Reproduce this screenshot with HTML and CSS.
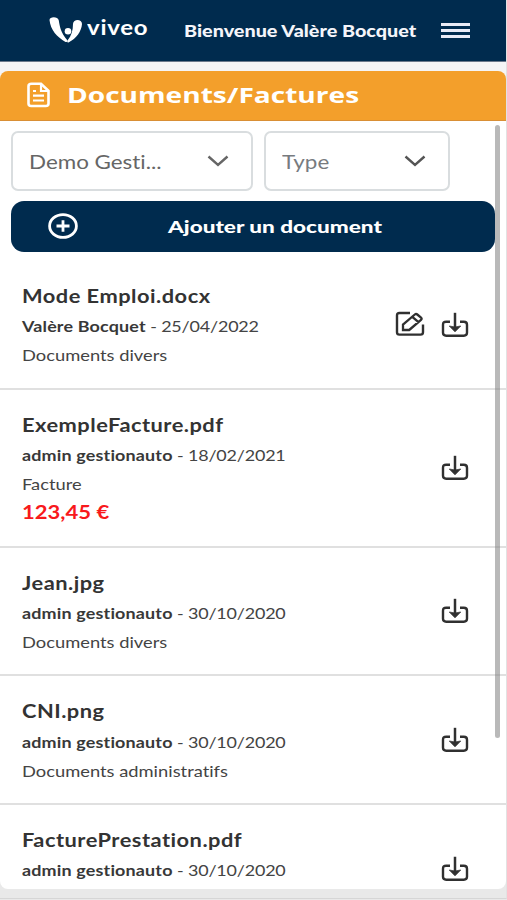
FILE: index.html
```html
<!DOCTYPE html>
<html lang="fr">
<head>
<meta charset="utf-8">
<meta name="viewport" content="width=device-width">
<title>Documents/Factures</title>
<link rel="stylesheet" href="styles.css">
</head>
<body>
<svg class="defs" aria-hidden="true">
  <symbol id="download" viewBox="0 0 28 26">
    <path d="M9 9.700H5.200Q2 9.700 2 12.700V20.800Q2 23.700 5.200 23.700H22.800Q26 23.700 26 20.800V12.700Q26 9.700 22.800 9.700H19" fill="none" stroke="currentColor" stroke-width="2.400"/>
    <path d="M14 .8V17" fill="none" stroke="currentColor" stroke-width="2.500"/>
    <path d="M8.300 14Q14 16 19.700 14L14 19.800Z" fill="currentColor" stroke="currentColor" stroke-width=".8"/>
  </symbol>
  <symbol id="edit" viewBox="0 0 30 26">
    <path d="M15 2H4.500Q2 2 2 4.400V21.200Q2 23.600 4.500 23.600H25.400Q28 23.600 28 21.200V13.500" fill="none" stroke="currentColor" stroke-width="2.400"/>
    <path d="M8 19V13.600L19.800 3.500Q21 2.400 22.300 3.500L26 6.600Q27.300 7.800 26 9L14.200 19ZM17.300 5.800L23.500 11.200" fill="none" stroke="currentColor" stroke-width="2.300"/>
  </symbol>
</svg>
<div class="app">
  <header class="topbar">
    <div class="brand">
      <svg class="logo" viewBox="0 0 34 28">
        <path d="M.5 4C.5.500 9 .200 9.800 4.500C10.600 9.500 11.500 16.500 18.500 24.500Q18.500 26.500 16.500 26C8 21 1.500 14 .500 4Z" fill="#fff"/>
        <path d="M24 8C24.200 2.800 33 2.800 33 8C32.500 15 27.500 22.500 19.500 26.500Q17.500 27 18.500 24.500C22.500 19.500 24 14 24 8Z" fill="#fff"/>
        <circle cx="19" cy="15.300" r="3.300" fill="#fff"/>
      </svg>
      <span class="brand-name">viveo</span>
    </div>
    <div class="welcome"><span>Bienvenue Valère Bocquet</span></div>
    <div class="burger"><i></i><i></i><i></i></div>
  </header>
  <div class="title-wrap">
  <div class="title">
    <svg class="file" viewBox="0 0 24 26">
      <path d="M5 1.800H14.500L22 8.700V21.500Q22 24 19.300 24H4.700Q2 24 2 21.500V4.200Q2 1.800 5 1.800Z" fill="none" stroke="#fff" stroke-width="2.600"/>
      <path d="M14.500 2V9H22M6.500 9H9.500M6.500 13.700H17.500M6.500 18.500H17.500" fill="none" stroke="#fff" stroke-width="2.200"/>
    </svg>
    <h1>Documents/Factures</h1>
  </div>
  </div>
  <main class="content">
    <div class="filters">
      <div class="select wide"><span>Demo Gesti...</span><svg viewBox="0 0 22 12"><path d="M1.500 1.500L11 10L20.500 1.500" fill="none" stroke="currentColor" stroke-width="2.400"/></svg></div>
      <div class="select type"><span>Type</span><svg viewBox="0 0 22 12"><path d="M1.500 1.500L11 10L20.500 1.500" fill="none" stroke="currentColor" stroke-width="2.400"/></svg></div>
    </div>
    <div class="add">
      <svg viewBox="0 0 30 26"><ellipse cx="15" cy="13" rx="13.400" ry="11.400" fill="none" stroke="#fff" stroke-width="2.800"/><path d="M8.500 13H21.500M15 7.300V18.700" stroke="#fff" stroke-width="2.800"/></svg>
      <span>Ajouter un document</span>
    </div>
    <ul class="list">
      <li><div><p class="name">Mode Emploi.docx</p><p class="line"><b>Valère Bocquet</b> - 25/04/2022</p><p class="line kind">Documents divers</p></div><nav><svg class="ed"><use href="#edit"/></svg><svg class="dl"><use href="#download"/></svg></nav></li>
      <li><div><p class="name">ExempleFacture.pdf</p><p class="line"><b>admin gestionauto</b> - 18/02/2021</p><p class="line kind">Facture</p><p class="price">123,45 €</p></div><nav><svg class="dl"><use href="#download"/></svg></nav></li>
      <li><div><p class="name">Jean.jpg</p><p class="line"><b>admin gestionauto</b> - 30/10/2020</p><p class="line kind">Documents divers</p></div><nav><svg class="dl"><use href="#download"/></svg></nav></li>
      <li><div><p class="name">CNI.png</p><p class="line"><b>admin gestionauto</b> - 30/10/2020</p><p class="line kind">Documents administratifs</p></div><nav><svg class="dl"><use href="#download"/></svg></nav></li>
      <li><div><p class="name">FacturePrestation.pdf</p><p class="line"><b>admin gestionauto</b> - 30/10/2020</p></div><nav class="last"><svg class="dl"><use href="#download"/></svg></nav></li>
    </ul>
    <div class="scrollbar"></div>
  </main>
</div>
</body>
</html>
```

FILE: styles.css
```css
* { box-sizing: border-box; }
body { margin: 0; background: #e9e9e9; font-family: Lato, sans-serif; color: #333; font-variant-ligatures: none; }
h1, p, ul { margin: 0; padding: 0; }
.defs { display: block; width: 0; height: 0; }
.app { width: 507px; height: 899px; overflow: hidden; border-right: 1px solid #e2e2e2; border-bottom: 1px solid #d6d6d6; display: flex; flex-direction: column; background: #e9e9e9; }
.topbar { height: 62px; flex: none; background: #002b4e; display: flex; align-items: center; color: #fff; border-bottom: 1px solid #6c7a8c; }
.brand { display: flex; align-items: center; width: 184px; padding-left: 49px; }
.logo { width: 34px; height: 28px; flex: none; margin-top: -1px; }
.brand-name { font-size: 20px; font-weight: 700; line-height: 24px; letter-spacing: .6px; margin: -7px 0 0 4px; transform: scaleX(1.2); transform-origin: 0 50%; }
.welcome { width: 257px; }
.welcome span { display: inline-block; font-weight: 900; font-size: 16px; line-height: 20px; transform: scaleX(1.235); transform-origin: 0 50%; color: #f4f5fa; }
.burger { width: 29px; display: flex; flex-direction: column; gap: 3px; }
.burger i { height: 3px; background: #e9ebf6; }
.title-wrap { flex: none; padding-top: 9px; background: #f5f5f6; }
.title { height: 50px; background: #f39f2b; border-bottom: 1px solid #d98f35; border-radius: 8px 8px 0 0; display: flex; align-items: center; padding-left: 26px; color: #fff; }
.file { width: 25px; height: 26px; margin-top: -1px; }
.title h1 { font: bold 22px/30px "Open Sans", sans-serif; margin: -3px 0 0 16px; transform: scaleX(1.276); transform-origin: 0 50%; }
.content { position: relative; height: 768px; flex: none; overflow: hidden; background: #fff; border-radius: 0 0 8px 8px; padding-top: 10px; }
.filters { display: flex; gap: 11px; padding-left: 11px; }
.select { height: 60px; border: 2px solid #d9dddf; border-radius: 7px; display: flex; align-items: center; justify-content: space-between; color: #666; font-size: 20px; padding: 0 22px 0 16px; }
.select span { transform: scaleX(1.12); transform-origin: 0 50%; }
.select svg { width: 22px; height: 12px; }
.wide { width: 242px; }
.type { width: 186px; color: #777b7f; }
.type svg { color: #555; }
.add { margin: 10px 0 0 11px; width: 484px; height: 51px; background: #002b4e; border-radius: 13px; display: flex; align-items: center; color: #fff; padding-left: 37px; }
.add svg { width: 30px; height: 26px; margin-top: -1px; }
.add span { margin-left: 90px; font-size: 17px; font-weight: 900; transform: scaleX(1.325); transform-origin: 0 50%; }
.list { list-style: none; margin-top: 9px; }
.list li { display: flex; justify-content: space-between; border-bottom: 2px solid #e0e0e0; padding: 21px 37px 18.100px 22px; }
.list li:last-child { border-bottom: 0; }
.list p { line-height: 29.2px; white-space: nowrap; transform-origin: 0 50%; }
.name { font-size: 18px; font-weight: 700; letter-spacing: .4px; transform: scaleX(1.213); }
.line { font-size: 16px; transform: scaleX(1.12); letter-spacing: -.15px; color: #444; }
.line b { letter-spacing: .15px; color: #383838; }
.line.kind { letter-spacing: 0; transform: scaleX(1.145); }
.price { font-size: 18px; font-weight: 700; color: #f8191c; transform: scaleX(1.225); }
nav { display: flex; gap: 17px; align-items: center; color: #303030; }
nav svg { margin-top: -2px; }
nav.last { height: 87.600px; }
.ed { width: 30px; height: 26px; margin-top: -3px; margin-right: -.500px; }
.dl { width: 28px; height: 26px; }
.scrollbar { position: absolute; right: 6px; top: 4px; width: 5px; height: 613px; border-radius: 3px; background: rgba(128,128,128,.55); }
```
